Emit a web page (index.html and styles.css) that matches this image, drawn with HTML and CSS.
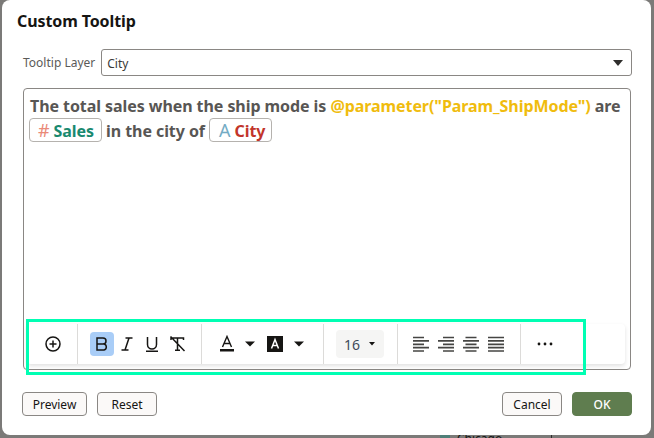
FILE: index.html
```html
<!DOCTYPE html>
<html lang="en">
<head>
<meta charset="utf-8">
<title>Custom Tooltip</title>
<link rel="stylesheet" href="styles.css">
</head>
<body>
<div class="peek"><span class="swatch"></span><span class="peek-text">Chicago</span><span class="peek-line"></span></div>
<main class="dialog">
  <h1 class="title">Custom Tooltip</h1>
  <div class="layer-row">
    <label class="layer-label">Tooltip Layer</label>
    <div class="select"><span>City</span><svg class="caret" width="12" height="7" viewBox="0 0 12 7"><path d="M1 0h10L6 6z" fill="#2f2e2c"/></svg></div>
  </div>
  <div class="editor">
    <div class="editor-text">
      <div class="line">The total sales when the ship mode is <span class="param">@parameter("Param_ShipMode")</span> are</div>
      <div class="line line-chips"><span class="chip"><span class="hash">#</span><span class="measure">Sales</span></span> in the city of <span class="chip chip-city"><span class="attr">A</span><span class="dim">City</span></span></div>
    </div>
    <div class="toolbar">
      <div class="group group-add">
        <svg class="icon" width="18" height="18" viewBox="0 0 18 18" fill="none" stroke="#161513" stroke-width="1.5"><circle cx="9" cy="9" r="7"/><path d="M5.500 9h7M9 5.500v7"/></svg>
      </div>
      <div class="group group-style">
        <span class="btn btn-on"><svg width="18" height="18" viewBox="0 0 18 18" fill="none" stroke="#161513" stroke-width="1.5"><path d="M4 3h6a3 3 0 0 1 0 6H4zM4 9h7a3.100 3.100 0 0 1 0 6H4z"/></svg></span>
        <span class="btn"><svg width="18" height="18" viewBox="0 0 18 18" fill="none" stroke="#161513" stroke-width="1.5"><path d="M7.500 3h7M3.500 15h7M11 3 7 15"/></svg></span>
        <span class="btn"><svg width="18" height="18" viewBox="0 0 18 18" fill="none" stroke="#161513" stroke-width="1.5"><path d="M4.500 2v7.500a4.500 4.500 0 0 0 9 0V2M3 16.300h12"/></svg></span>
        <span class="btn"><svg width="18" height="18" viewBox="0 0 18 18" fill="none" stroke="#161513" stroke-width="1.5"><path d="M3 5V3h12.500v2M9.500 3v12M7 15.300h5M2.500 1.500l14 14.500"/></svg></span>
      </div>
      <div class="group group-color">
        <svg width="18" height="18" viewBox="0 0 18 18"><path d="M4.500 12 9 1.500 13.500 12M6 8.500h6" fill="none" stroke="#161513" stroke-width="1.400"/><rect x="2" y="14" width="14" height="2.500" fill="#161513"/></svg>
        <svg class="tri" width="10" height="6" viewBox="0 0 10 6"><path d="M0 .5h10L5 5.500z" fill="#161513"/></svg>
        <svg class="swatch-a" width="16" height="16" viewBox="0 0 16 16"><rect width="16" height="16" fill="#161513"/><path d="M4.500 12.500 8 3.500l3.500 9M5.700 9.500h4.600" fill="none" stroke="#fff" stroke-width="1.500"/></svg>
        <svg class="tri" width="10" height="6" viewBox="0 0 10 6"><path d="M0 .5h10L5 5.500z" fill="#161513"/></svg>
      </div>
      <div class="group group-size">
        <span class="size"><span>16</span><svg width="6" height="4" viewBox="0 0 6 4"><path d="M0 0h6L3 3.500z" fill="#161513"/></svg></span>
      </div>
      <div class="group group-align">
        <svg width="16" height="16" viewBox="0 0 16 16" fill="none" stroke="#454543" stroke-width="1.700"><path d="M0 1.500h11M0 4.900h16M0 8.300h11M0 11.700h16M0 15h11"/></svg>
        <svg width="16" height="16" viewBox="0 0 16 16" fill="none" stroke="#454543" stroke-width="1.700"><path d="M5 1.500h11M0 4.900h16M5 8.300h11M0 11.700h16M5 15h11"/></svg>
        <svg width="16" height="16" viewBox="0 0 16 16" fill="none" stroke="#454543" stroke-width="1.700"><path d="M2.500 1.500h11M0 4.900h16M2.500 8.300h11M0 11.700h16M2.500 15h11"/></svg>
        <svg width="16" height="16" viewBox="0 0 16 16" fill="none" stroke="#454543" stroke-width="1.700"><path d="M0 1.500h16M0 4.900h16M0 8.300h16M0 11.700h16M0 15h16"/></svg>
      </div>
      <div class="group group-more">
        <svg width="16" height="4" viewBox="0 0 16 4" fill="#161513"><circle cx="2" cy="2" r="1.400"/><circle cx="8" cy="2" r="1.400"/><circle cx="14" cy="2" r="1.400"/></svg>
      </div>
    </div>
  </div>
  <div class="actions">
    <button class="button">Preview</button>
    <button class="button button-reset">Reset</button>
    <span class="spacer"></span>
    <button class="button button-fixed">Cancel</button>
    <button class="button button-ok">OK</button>
  </div>
</main>
<div class="highlight"></div>
</body>
</html>
```
FILE: styles.css
```css
* { box-sizing: border-box; }
html, body { margin: 0; height: 100%; }
body {
  position: relative;
  width: 654px;
  height: 438px;
  overflow: hidden;
  background: #7b7a78;
  font-family: "Noto Sans", "Open Sans", sans-serif;
  color: #161513;
}
.dialog {
  position: relative;
  width: 649px;
  height: 435px;
  margin-left: 2px;
  padding: 10px 19px 0 20px;
  background: #fff;
  border-radius: 8px;
  display: flex;
  flex-direction: column;
}
.title {
  margin: 0 0 0 -5px;
  height: 23px;
  font-size: 16px;
  line-height: 23px;
  font-weight: 700;
  letter-spacing: -.1px;
  color: #161513;
}
.layer-row {
  display: flex;
  align-items: center;
  gap: 6px;
  margin: 16px 0 0 1px;
  height: 27px;
}
.layer-label {
  font-size: 12px;
  color: #5b5a58;
  white-space: nowrap;
}
.select {
  flex: 1;
  height: 27px;
  display: flex;
  align-items: center;
  justify-content: space-between;
  padding: 1px 7px 0 5px;
  border: 1px solid #8a8784;
  border-radius: 3px;
  font-size: 12px;
  color: #3a3937;
}
.editor {
  position: relative;
  width: 608px;
  height: 282px;
  margin: 12px 0 0 1px;
  padding: 5px 6px;
  border: 1px solid #8a8784;
  border-radius: 4px;
}
.line {
  height: 25px;
  font-size: 16px;
  line-height: 25px;
  font-weight: 700;
  letter-spacing: -.07px;
  color: #585654;
  white-space: nowrap;
}
.line-chips { margin: -1px 0 0 -1px; }
.param { color: #f0bc0e; }
.chip {
  display: inline-block;
  height: 24px;
  line-height: 22px;
  padding: 0 7px 0 8px;
  border: 1px solid #b5b2ae;
  border-radius: 4px;
}
.chip-city { padding: 0 6px 0 9px; }
.hash { color: #ea8a78; font-size: 18px; font-weight: 400; margin-right: 4px; }
.measure { color: #19896f; }
.attr { color: #74abc4; font-size: 18px; font-weight: 400; margin-right: 4px; }
.dim { color: #c2352a; }
.toolbar {
  position: absolute;
  left: 3px;
  top: 235px;
  width: 598px;
  height: 40px;
  display: flex;
  align-items: stretch;
  background: #fff;
  border-radius: 4px;
  box-shadow: 0 2px 4px rgba(0, 0, 0, .12);
}
.group {
  display: flex;
  align-items: center;
  border-right: 1px solid #dcdbd9;
}
.group-add { width: 51px; padding-left: 17px; }
.group-style { width: 124px; padding-left: 12px; gap: 1px; }
.group-color { width: 122px; padding-left: 16px; }
.group-color .tri { margin: 0 12px 0 9px; }
.group-color .tri:last-child { margin: 0 0 0 11px; }
.group-size { width: 74px; padding-left: 12px; }
.group-align { width: 123px; padding-left: 15px; gap: 9px; }
.group-more { border-right: 0; padding-left: 16px; }
.btn {
  width: 24px;
  height: 24px;
  display: flex;
  align-items: center;
  justify-content: center;
  border-radius: 4px;
}
.btn-on { background: #a9cdf7; }
.size {
  width: 48px;
  height: 28px;
  display: flex;
  align-items: center;
  gap: 9px;
  padding-left: 8px;
  background: #f5f5f4;
  border-radius: 4px;
  font-size: 14px;
  color: #3f4a5a;
}
.actions {
  display: flex;
  align-items: center;
  gap: 10px;
  margin: 22px 0 0 0;
}
.spacer { flex: 1; }
.button {
  width: 65px;
  height: 24px;
  padding: 0;
  border: 1px solid #8a8784;
  border-radius: 4px;
  background: #fbf9f8;
  font: 400 12px "Noto Sans", sans-serif;
  color: #161513;
}
.button-reset, .button-fixed { width: 60px; }
.button-ok {
  width: 60px;
  border-color: #5f7d4f;
  background: #5f7d4f;
  color: #fff;
  font-weight: 500;
}
.highlight {
  position: absolute;
  left: 26px;
  top: 319px;
  width: 560px;
  height: 56px;
  border: 3px solid #00ffb3;
  pointer-events: none;
}
.peek {
  position: absolute;
  left: 440px;
  top: 435px;
  display: flex;
  gap: 7px;
  font-size: 12px;
  line-height: 14px;
  color: #161513;
}
.swatch { width: 10px; height: 6px; background: #4f7f78; }
.peek-text { width: 60px; margin-top: -3px; }
.peek-line {
  position: absolute;
  left: 111px;
  top: 0;
  width: 1px;
  height: 4px;
  background: #2f2e2c;
}
```
